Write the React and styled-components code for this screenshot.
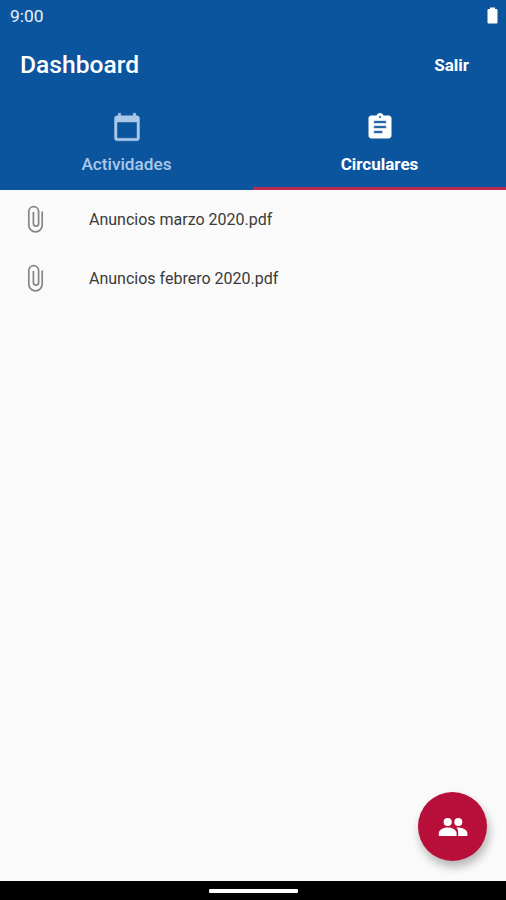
import { useState } from "react"
import { createGlobalStyle, styled } from "styled-components"
import { MdAssignment, MdCalendarToday } from "react-icons/md"

const BLUE = "#0b559f"
const RED = "#b80f3a"
const INDICATOR = "#bb2a50"

const GlobalStyle = createGlobalStyle`
    body {
        margin: 0;
        font-family: Roboto, sans-serif;
    }

    * {
        box-sizing: border-box;
    }
`

const Screen = styled.div`
    width: 100%;
    height: 100vh;
    position: relative;
    display: flex;
    flex-direction: column;
    overflow: hidden;
    background-color: #fafafa;
`

const Header = styled.header`
    height: 190px;
    flex-shrink: 0;
    display: flex;
    flex-direction: column;
    background-color: ${BLUE};
    color: #ffffff;
`

const StatusBar = styled.div`
    height: 30px;
    padding: 1px 8px 0 10px;
    display: flex;
    align-items: center;
    justify-content: space-between;
    font-size: 17.4px;
    color: #e9f1fa;
`

const AppBar = styled.div`
    height: 70px;
    padding: 0 37px 0 20px;
    display: flex;
    align-items: center;
    justify-content: space-between;
`

const Title = styled.h1`
    margin: 0;
    font-size: 24.6px;
    font-weight: 500;
    line-height: 28px;
`

const TextButton = styled.button`
    padding: 0;
    border: none;
    background: none;
    font-family: inherit;
    font-size: 17px;
    font-weight: 700;
    color: #ffffff;
`

const Tabs = styled.div`
    flex: 1;
    display: flex;
`

const Tab = styled.button`
    flex: 1;
    padding: 12px 0 0;
    display: flex;
    flex-direction: column;
    align-items: center;
    border: none;
    border-bottom: 3px solid ${(props) => props.$active ? INDICATOR : "transparent"};
    background: none;
    font-family: inherit;
    font-size: ${(props) => props.$active ? "17px" : "17.2px"};
    font-weight: ${(props) => props.$active ? 700 : 500};
    line-height: 20px;
    color: ${(props) => props.$active ? "#ffffff" : "#abc8e9"};

    svg {
        stroke-width: 0;
    }

    svg path:last-child {
        stroke-width: 0.35px;
    }
`

const TabLabel = styled.span`
    margin-top: 12px;
`

const List = styled.ul`
    flex: 1;
    margin: 0;
    padding: 0;
    list-style: none;
`

const ListItem = styled.li`
    height: 59px;
    padding-left: 20px;
    display: flex;
    align-items: center;
    gap: 39px;
    font-size: 16px;
    color: #3a3a3a;
`

const Fab = styled.button`
    width: 69px;
    height: 69px;
    padding: 0;
    position: absolute;
    right: 19px;
    bottom: 39px;
    display: flex;
    align-items: center;
    justify-content: center;
    border: none;
    border-radius: 50%;
    background-color: ${RED};
    color: #ffffff;
    box-shadow: 2px 6px 10px rgba(0, 0, 0, .28);
`

const NavigationBar = styled.div`
    height: 19px;
    flex-shrink: 0;
    padding-top: 1px;
    display: flex;
    align-items: center;
    justify-content: center;
    background-color: #000000;
`

const Handle = styled.div`
    width: 89px;
    height: 4px;
    border-radius: 1px;
    background-color: #ffffff;
`

const BatteryIcon = () => (
    <svg width="11" height="17" viewBox="0 0 11 17" fill="#ffffff">
        <path d="M3 0.4h5v1.5h1.4a1.1 1.1 0 0 1 1.1 1.1v12.4a1.1 1.1 0 0 1-1.1 1.1H1.6a1.1 1.1 0 0 1-1.1-1.1V3a1.1 1.1 0 0 1 1.1-1.1H3z" />
    </svg>
)

const ClipIcon = () => (
    <svg width="30" height="30" viewBox="0 0 30 30" fill="none" stroke="#858585" strokeWidth="1.7">
        <path d="M22.2 6.5v13.7a6.7 6.7 0 0 1-13.4 0V6.5a4.9 4.9 0 0 1 9.8 0v12a2.6 2.6 0 0 1-5.2 0V7" />
    </svg>
)

const PeopleIcon = () => (
    <svg width="30" height="30" viewBox="0 0 30 30" fill="currentColor">
        <circle cx="9.7" cy="10" r="4.1" />
        <circle cx="20.3" cy="10" r="4" />
        <path d="M0.8 24v-2.9c0-3.7 5.4-5.7 9-5.7s8.8 2 8.8 5.7V24z" />
        <path d="M18.4 15.5c4-.6 11 1.6 11 5.6V24h-9.2v-2.9c0-2.4-.3-4-1.8-5.6z" />
    </svg>
)

const files = ["Anuncios marzo 2020.pdf", "Anuncios febrero 2020.pdf"]

export default () => {

    const [tab, setTab] = useState("circulares")

    return (
        <>
        <GlobalStyle />
        <Screen>
            <Header>
                <StatusBar>
                    <span>9:00</span>
                    <BatteryIcon />
                </StatusBar>
                <AppBar>
                    <Title>Dashboard</Title>
                    <TextButton>Salir</TextButton>
                </AppBar>
                <Tabs>
                    <Tab $active={tab === "actividades"} onClick={() => setTab("actividades")}>
                        <MdCalendarToday size={30} />
                        <TabLabel>Actividades</TabLabel>
                    </Tab>
                    <Tab $active={tab === "circulares"} onClick={() => setTab("circulares")}>
                        <MdAssignment size={30} />
                        <TabLabel>Circulares</TabLabel>
                    </Tab>
                </Tabs>
            </Header>
            <List>
                {files.map((file) => (
                    <ListItem key={file}>
                        <ClipIcon />
                        <span>{file}</span>
                    </ListItem>
                ))}
            </List>
            <NavigationBar>
                <Handle />
            </NavigationBar>
            <Fab aria-label="Personas">
                <PeopleIcon />
            </Fab>
        </Screen>
        </>
    )
}
